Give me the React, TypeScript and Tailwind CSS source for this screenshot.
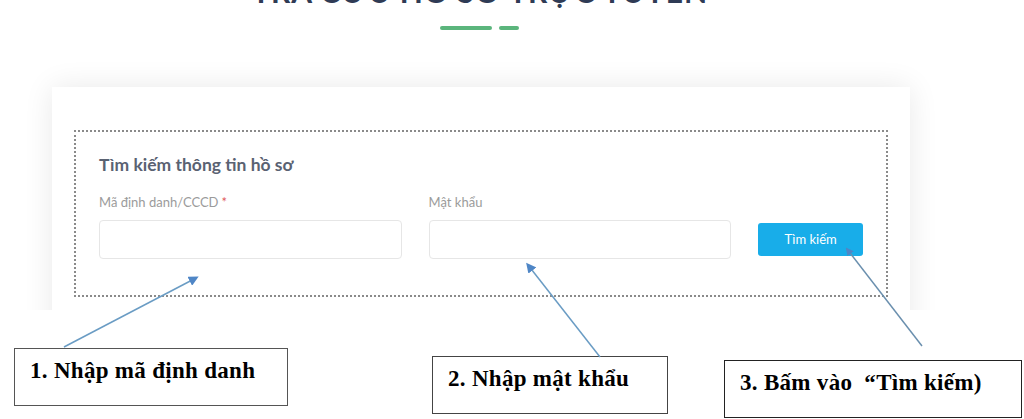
import React from "react";

const steps = [
    { text: "1. Nhập mã định danh", className: "mt-[38px] ml-[14px] w-[274px] border-[#555]" },
    { text: "2. Nhập mật khẩu", className: "mt-[46px] ml-[144px] w-[236px] border-[#444]" },
    { text: "3. Bấm vào  “Tìm kiếm)", className: "mt-[50px] ml-[56px] w-[298px] border-[#222]" },
];

const Field = ({ label, required }: { label: string; required?: boolean }) => (
    <div className="flex w-[303px] flex-col">
        <label className="text-[13px] leading-[16px] text-[#9b9b9b]">
            {label}
            {required && <span className="ml-[3px] text-[#e05a5a]">*</span>}
        </label>
        <input className="mt-[10px] h-[39px] w-full rounded-[4px] border border-[#e6e6e6] bg-white outline-none" />
    </div>
);

const App = () => {
    return (
        <div className="relative h-[419px] w-[1024px] overflow-hidden bg-white font-['Lato','Noto_Sans',sans-serif]">
            {/* screenshot part */}
            <div className="h-[310px] w-[960px] overflow-hidden bg-white">
                <h1 className="-mt-[25px] text-center text-[30px] font-bold leading-[32px] tracking-[1px] text-[#2f3b55]">
                    TRA CỨU HỒ SƠ TRỰC TUYẾN
                </h1>
                <div className="mt-[19px] flex justify-center gap-[7px] pr-[1px]">
                    <span className="h-[4px] w-[52px] rounded-full bg-[#5bb57c]" />
                    <span className="h-[4px] w-[20px] rounded-full bg-[#5bb57c]" />
                </div>

                <div className="ml-[52px] mr-[50px] mt-[57px] h-[260px] bg-white px-[22px] pt-[43px] shadow-[0_0_28px_rgba(0,0,0,0.09)]">
                    <div className="border-2 border-dotted border-[#8a8a8a] px-[23px] pb-[36px] pt-[23px]">
                        <h2 className="text-[17.5px] font-bold leading-[20px] text-[#5a6272]">
                            Tìm kiếm thông tin hồ sơ
                        </h2>
                        <div className="mt-[19px] flex items-start gap-[27px]">
                            <Field label="Mã định danh/CCCD" required />
                            <Field label="Mật khẩu" />
                            <button className="mt-[29px] h-[33px] w-[105px] rounded-[3px] bg-[#18ade9] text-[13px] text-white">
                                Tìm kiếm
                            </button>
                        </div>
                    </div>
                </div>
            </div>

            {/* annotations */}
            <div className="flex items-start">
                {steps.map((s, i) => (
                    <div
                        key={i}
                        className={`h-[58px] shrink-0 whitespace-pre border-[1.5px] pl-[15px] pt-[9px] font-['Liberation_Serif',serif] text-[23px] font-bold leading-[26px] tracking-[0.3px] text-black ${s.className}`}
                    >
                        {s.text}
                    </div>
                ))}
            </div>

            <svg className="pointer-events-none absolute inset-0" width="1024" height="419">
                <defs>
                    <marker id="ah" markerWidth="8" markerHeight="8" refX="6" refY="4" orient="auto" markerUnits="userSpaceOnUse">
                        <path d="M0,0 L8,4 L0,8 z" fill="#4f86c6" />
                    </marker>
                    <marker id="ah2" markerWidth="10" markerHeight="10" refX="7" refY="5" orient="auto" markerUnits="userSpaceOnUse">
                        <path d="M0,0 L10,5 L0,10 z" fill="#4f86c6" />
                    </marker>
                </defs>
                <line x1="64" y1="347" x2="196" y2="278" stroke="#6a9cc4" strokeWidth="1.5" markerEnd="url(#ah2)" />
                <line x1="600" y1="357" x2="528" y2="265" stroke="#6a9cc4" strokeWidth="1.5" markerEnd="url(#ah2)" />
                <line x1="922" y1="346" x2="847" y2="249" stroke="#6a8fae" strokeWidth="1.5" markerEnd="url(#ah)" />
            </svg>
        </div>
    );
};

export default App;
